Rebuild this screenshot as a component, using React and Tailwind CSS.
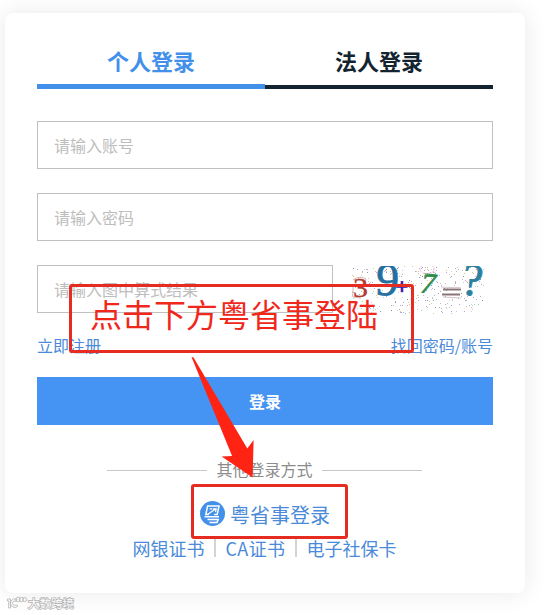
import React, { useState } from "react";

const TABS = [
  { key: "person", label: "个人登录" },
  { key: "legal", label: "法人登录" },
];

const OTHER_LINKS = ["网银证书", "CA证书", "电子社保卡"];

const NOISE_COLORS = ["#7a6fd0", "#c9a24a", "#5fae7c", "#d07a9a", "#4d4d8c", "#8fb5d8", "#b9b94f", "#9c59b8"];

// fixed seed, so the dots stay put between renders
function makeNoise(count) {
  let seed = 97;
  const next = () => {
    seed = (seed * 16807) % 2147483647;
    return seed / 2147483647;
  };
  return Array.from({ length: count }, () => ({
    x: Math.floor(next() * 132),
    y: Math.floor(next() * 48),
    color: NOISE_COLORS[Math.floor(next() * NOISE_COLORS.length)],
  }));
}

const NOISE = makeNoise(300);

function Captcha() {
  return (
    <svg className="mt-px ml-[19px] h-12 w-[132px] shrink-0" viewBox="0 0 132 48" fontFamily="Liberation Serif, serif">
      {NOISE.map((n, i) => (
        <rect key={i} x={n.x} y={n.y} width="1" height="1" fill={n.color} opacity="0.6" />
      ))}
      <path d="M1 14q7-5 13-1l-1 5M1 19v6q-2 3 0 6l8 1" fill="none" stroke="#d3aaa8" strokeWidth="0.9" />
      <text x="1" y="31" fontSize="28" fill="#b23a35" stroke="#b23a35" strokeWidth="0.4" textLength="15" lengthAdjust="spacingAndGlyphs">3</text>
      <text x="24" y="29" fontSize="46" fill="#256f9f" stroke="#256f9f" strokeWidth="0.8" transform="rotate(3 34 15)">9</text>
      <text x="44" y="28" fontSize="21" fill="#4a1fb0" stroke="#4a1fb0" strokeWidth="1.4">+</text>
      <text x="69" y="27" fontSize="29" fill="#2e8b4a" stroke="#2e8b4a" strokeWidth="0.8" fontStyle="italic" transform="rotate(6 75 17)">7</text>
      <ellipse cx="75" cy="3" rx="7" ry="5" fill="none" stroke="#e6bfd6" strokeWidth="1" strokeDasharray="2 1" />
      <path d="M91 23.5h18M90 28.5h18" stroke="#8a7478" strokeWidth="1.8" />
      <path d="M89 21l20 1M91 31l18 1" stroke="#d2c4c8" strokeWidth="1" />
      <text x="110" y="29" fontSize="46" fill="#2d7f9e" stroke="#2d7f9e" strokeWidth="0.8" transform="rotate(9 118 15)">?</text>
    </svg>
  );
}

function YueIcon() {
  return (
    <svg className="h-[25px] w-[25px] shrink-0" viewBox="0 0 25 25" fill="none">
      <circle cx="12.5" cy="12.5" r="12.5" fill="#4390ea" />
      <g stroke="#fff" strokeWidth="1.5">
        <path d="M8.8 13.5H5.8L7.6 5H19l-1.8 8.5h-3" />
        <path d="M9.5 7.8h2.6M7.5 13.6l8.3-5.8M12.8 7.8h3.4l-.7 3.2" strokeWidth="1.2" />
        <path d="M4.5 15.8h14.5M7.5 18.5h10.7l-1.2 3H9.5" />
      </g>
    </svg>
  );
}

function Watermark() {
  return (
    <svg className="absolute left-[6px] top-[595px] h-4 w-[72px]" viewBox="0 0 72 16" fill="none">
      <g stroke="#b9b9b9" strokeWidth="0.9">
        <path d="M1.5 4h3v9H2.7V6H1.5z" />
        <path d="M11 4.5a4.3 4.3 0 1 0 1 6.5l-1.7-1.2a2.2 2.2 0 1 1-.3-3.4z" />
        <circle cx="12" cy="4.5" r="2.2" />
        <circle cx="15.5" cy="4.5" r="2.2" />
        <circle cx="18.7" cy="4.5" r="2" />
      </g>
      <text x="22" y="12.5" fontSize="11.5" fontFamily="Noto Sans CJK SC, sans-serif" fill="#fff" stroke="#b4b4b4" strokeWidth="1.6" paintOrder="stroke">
        大数跨境
      </text>
    </svg>
  );
}

function Annotations() {
  return (
    <>
      <div className="absolute left-[69px] top-[284px] flex h-[69px] w-[345px] items-center rounded-[3px] border-3 border-[#e62b20] pl-[18px] text-[32px] leading-none text-[#f0281c]">
        <span className="relative -top-[6px] whitespace-nowrap">点击下方粤省事登陆</span>
      </div>
      <div className="absolute left-[191px] top-[484px] h-[55px] w-[157px] rounded-[3px] border-3 border-[#e62b20]" />
      <svg className="absolute left-[190px] top-[355px] h-[125px] w-[66px]" viewBox="190 355 66 125">
        <path d="M191.5 357l2 .5 53.8 91 6.3-8.5-1 37.5-31-21 10.5-.5z" fill="#ff2313" />
      </svg>
    </>
  );
}

export default function App() {
  const [tab, setTab] = useState("person");

  return (
    <div className="relative h-[615px] w-[555px] overflow-hidden bg-white pl-[5px] pt-[13px] font-['Noto_Sans_CJK_SC',sans-serif]">
      <div className="h-[580px] w-[520px] rounded-lg bg-white px-8 pt-6 shadow-[0_0_24px_rgba(0,0,0,0.09)]">
        <div className="flex h-[52px]">
          {TABS.map(t => (
            <button
              key={t.key}
              onClick={() => setTab(t.key)}
              className={`h-[52px] flex-1 text-[22px] leading-[44px] font-bold ${
                tab === t.key ? "border-b-5 border-[#4390ea] pb-px text-[#4390ea]" : "border-b-4 border-[#132430] pb-[2px] text-[#132430]"
              }`}
            >
              {t.label}
            </button>
          ))}
        </div>

        <form className="mt-8" onSubmit={e => e.preventDefault()}>
          <input className="block h-12 w-full border border-[#c0c0c0] px-4 text-base outline-none placeholder:text-[#bdbdbd]" placeholder="请输入账号" />
          <input type="password" className="mt-6 block h-12 w-full border border-[#c0c0c0] px-4 text-base outline-none placeholder:text-[#bdbdbd]" placeholder="请输入密码" />
          <div className="mt-6 flex h-12">
            <input className="h-12 w-[296px] border border-[#c0c0c0] px-4 text-base outline-none placeholder:text-[#bdbdbd]" placeholder="请输入图中算式结果" />
            <Captcha />
          </div>

          <div className="mt-5 flex justify-between text-base leading-6 text-[#4a8ad8]">
            <a href="#register">立即注册</a>
            <a href="#forgot">找回密码/账号</a>
          </div>

          <button className="mt-5 block h-12 w-full bg-[#4593f3] text-base font-bold text-white">登录</button>
        </form>

        <div className="mt-[33px] flex items-center justify-center gap-[9px] pr-px text-base leading-6 text-[#8c8c8c]">
          <span className="h-px w-[100px] bg-[#c8c8c8]" />
          <span className="relative -top-px">其他登录方式</span>
          <span className="h-px w-[100px] bg-[#c8c8c8]" />
        </div>

        <a href="#yss" className="mt-4 flex h-[30px] items-center justify-center gap-[5px] text-xl leading-[30px] text-[#4a8ad8]">
          <YueIcon />
          <span className="relative top-[2px]">粤省事登录</span>
        </a>

        <div className="mt-2 flex items-center justify-center pr-px text-lg leading-6 text-[#4a8ad8]">
          {OTHER_LINKS.map((label, i) => (
            <React.Fragment key={label}>
              {i > 0 && <span className="mx-[9.5px] h-[18px] w-[2px] bg-[#d4d4d4]" />}
              <a href="#other" className={label.startsWith("CA") ? "tracking-[0.4px]" : ""}>{label}</a>
            </React.Fragment>
          ))}
        </div>
      </div>

      <Annotations />
      <Watermark />
    </div>
  );
}
